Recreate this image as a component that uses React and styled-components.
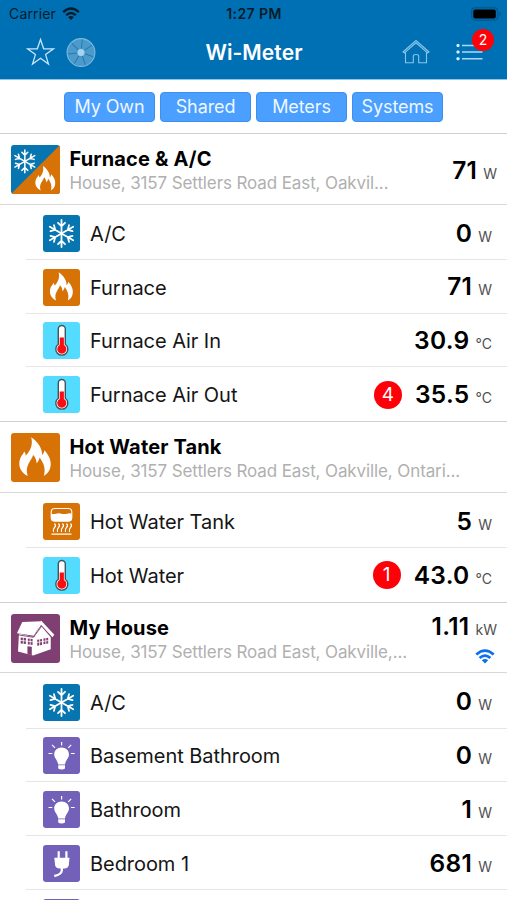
import React from "react";
import styled, { createGlobalStyle } from "styled-components";

const GlobalStyle = createGlobalStyle`
  * {
    box-sizing: border-box;
  }

  body {
    margin: 0;
    background: #fff;
    font-family: Inter, "Liberation Sans", sans-serif;
  }
`;

const Flame = () => (
  <path
    fill="#fff"
    d="M15.4 3.5C21 7 25 13.500 24.500 18.500C25.700 17.500 26.300 16 26.500 14.500C30.500 19 33.300 24.500 31 30.500C30 33 28.400 34.700 26 36C27.700 30 26 25.500 22.500 20.500C22 22.500 21.200 24 20 25.500C19.700 22.500 18.700 20 17 18.500C15.700 23.500 9.500 27.500 12.500 36C7 33.500 3.500 27.500 6.500 20.500C7.500 18.500 9 17.500 9.500 15.500C10.400 16.500 10.700 17.600 10.800 19C15 14.500 17 9.500 15.400 3.500Z"
  />
);

const Snow = () => (
  <g stroke="#fff" strokeWidth="1.8" strokeLinecap="round" fill="none">
    {[0, 60, 120, 180, 240, 300].map((angle) => (
      <path
        key={angle}
        transform={`rotate(${angle} 18.5 18.5)`}
        d="M18.500 18.500V5M15 7.800L18.500 11.200L22 7.800"
      />
    ))}
  </g>
);

const drawings = {
  snow: <Snow />,
  flame: (
    <g transform="translate(2.200 .2) scale(.87)">
      <Flame />
    </g>
  ),
  bigFlame: (
    <g transform="translate(1.400 0) scale(.9)">
      <Flame />
    </g>
  ),
  hvac: (
    <>
      <path d="M37 0V37H0Z" fill="#d77206" />
      <g transform="translate(-1.400 .5) scale(.64)">
        <Snow />
      </g>
      <g transform="translate(15.300 13.800) scale(.57)">
        <Flame />
      </g>
    </>
  ),
  thermometer: (
    <>
      <path
        d="M15.300 22.300V7A3.500 3.500 0 0 1 22.300 7V22.300A6 6 0 1 1 15.300 22.300Z"
        fill="#fff"
        stroke="#42545c"
        strokeWidth="1.400"
      />
      <path
        d="M16.700 15.500H20.900V23.100A4.600 4.600 0 1 1 16.700 23.100Z"
        fill="#f80d12"
      />
    </>
  ),
  heater: (
    <>
      <rect x="8.200" y="5.500" width="20.600" height="12.500" rx="3.500" fill="none" stroke="#fff" strokeWidth="1.100" />
      <path
        fill="#fff"
        d="M8 10.700Q10.500 11.500 13 10.700T18.500 10.700T24 10.700T29 10.700V15Q29 18.500 25.500 18.500H11.500Q8 18.500 8 15Z"
      />
      <path
        fill="none"
        stroke="#fff"
        strokeWidth="1.200"
        d="M11.500 20.500q2 2 0 4t-1 4.500M15.500 20.500q2 2 0 4t-1 4.500M19.500 20.500q2 2 0 4t-1 4.500M23.500 20.500q2 2 0 4t-1 4.500M27.500 20.500q2 2 0 4t-1 4.500M8.500 31.200H28.500"
      />
    </>
  ),
  house: (
    <>
      <path d="M6 15L17.500 17.300L23.200 9.600L30 17.500V26.700L16.700 31.300L5.300 28.300Z" fill="#fff" />
      <path d="M8.500 6L23 5.500L17.400 16.500L4.500 14.500Z" fill="#fff" />
      <path d="M22.700 5L32.700 15.600L31.300 17.500L23.200 8.600L17.200 17.500Z" fill="#fff" />
      <path d="M23 8.300L16.900 17.600L4.800 15.600" fill="none" stroke="#803f72" strokeWidth=".7" />
      <path
        fill="#803f72"
        d="M7.300 17.700l4 .5v4.500l-4-.4ZM12.700 18.500l3.600.4v4.500l-3.600-.4ZM19.800 19.400l3.600-.6v4.600l-3.600.6ZM24.500 18.500l3.600-.6v4.400l-3.600.6ZM12.400 24.400l3.300.3v6.400l-3.300-.8Z"
      />
      <path d="M9.300 17.500v5.500M14.500 18.500v5.500M7 19.900l9.500 1.100M21.600 18.800v5.500M26.300 17.700v5.500M19.500 21.500l9-1.500" stroke="#fff" strokeWidth=".6" />
    </>
  ),
  bulb: (
    <g fill="#fff">
      <path d="M18.600 10.500C23 10.500 26 13.700 26 17.500C26 21 22.400 23.500 22 27.500H15.200C14.800 23.500 11.200 21 11.200 17.500C11.200 13.700 14.200 10.500 18.600 10.500Z" />
      <path d="M15.200 28.300H22V31.500Q20.500 32.500 18.600 32.500T15.200 31.500Z" />
      <path
        stroke="#fff"
        strokeWidth="1.200"
        d="M18.600 5V8.500M9 7.900L12 10.900M28.200 7.900L25.200 10.900M5.500 16.500H9.300M27.900 16.500H31.700"
      />
    </g>
  ),
  plug: (
    <>
      <path d="M15.700 6.200V14M23.400 6.200V14" stroke="#fff" strokeWidth="2.200" />
      <path d="M11.300 12.800H26.500L25.700 20.500Q24.800 23.500 21.500 23.500H16.500Q13 23.500 12.200 20.500Z" fill="#fff" />
      <path d="M18.800 23V25.500Q18.500 29.500 11.300 31" fill="none" stroke="#fff" strokeWidth="2.300" />
    </>
  ),
};

const colors = {
  snow: "#0675b0",
  hvac: "#0675b0",
  flame: "#d77206",
  bigFlame: "#d77206",
  heater: "#d77206",
  thermometer: "#53dcff",
  house: "#803f72",
  bulb: "#7260b9",
  plug: "#7260b9",
};

const systems = [
  {
    name: "Furnace & A/C",
    address: "House, 3157 Settlers Road East, Oakvil...",
    icon: "hvac",
    value: "71",
    unit: "W",
    meters: [
      { name: "A/C", icon: "snow", value: "0", unit: "W" },
      { name: "Furnace", icon: "flame", value: "71", unit: "W" },
      { name: "Furnace Air In", icon: "thermometer", value: "30.9", unit: "°C" },
      { name: "Furnace Air Out", icon: "thermometer", value: "35.5", unit: "°C", alerts: 4 },
    ],
  },
  {
    name: "Hot Water Tank",
    address: "House, 3157 Settlers Road East, Oakville, Ontari...",
    icon: "bigFlame",
    meters: [
      { name: "Hot Water Tank", icon: "heater", value: "5", unit: "W" },
      { name: "Hot Water", icon: "thermometer", value: "43.0", unit: "°C", alerts: 1 },
    ],
  },
  {
    name: "My House",
    address: "House, 3157 Settlers Road East, Oakville,...",
    icon: "house",
    value: "1.11",
    unit: "kW",
    online: true,
    meters: [
      { name: "A/C", icon: "snow", value: "0", unit: "W" },
      { name: "Basement Bathroom", icon: "bulb", value: "0", unit: "W" },
      { name: "Bathroom", icon: "bulb", value: "1", unit: "W" },
      { name: "Bedroom 1", icon: "plug", value: "681", unit: "W" },
      { name: "", icon: "bulb" },
    ],
  },
];

const Wifi = ({ width, color }) => (
  <svg width={width} height={width * 0.75} viewBox="0 0 20 15">
    <g fill="none" stroke={color} strokeWidth="2.700">
      <path d="M1.300 5.600Q10-2.200 18.700 5.600" />
      <path d="M4.600 9Q10 4.200 15.400 9" />
    </g>
    <path d="M6.800 11.200Q10 8.600 13.200 11.200L10 14.500Z" fill={color} />
  </svg>
);

const MeterIcon = ({ name, size }) => (
  <IconBox $size={size} $color={colors[name]}>
    <svg width="100%" height="100%" viewBox="0 0 37 37">
      {drawings[name]}
    </svg>
  </IconBox>
);

const Reading = ({ value, unit }) => (
  <ReadingStyle>
    <Value>{value}</Value>
    <Unit>{unit}</Unit>
  </ReadingStyle>
);

const Header = () => (
  <HeaderStyle>
    <StatusBar>
      <Carrier>
        Carrier
        <Wifi width={18} color="#061c2a" />
      </Carrier>
      <Clock>1:27 PM</Clock>
      <Battery>
        <svg width="31" height="14" viewBox="0 0 31 14">
          <rect x=".7" y=".9" width="26" height="12.200" rx="3.500" fill="none" stroke="#07568a" strokeWidth="1.200" />
          <rect x="2.300" y="2.600" width="22.500" height="8.800" rx="2" fill="#000" />
          <path d="M28.300 5V9Q29.800 8.500 29.800 7T28.300 5Z" fill="#07568a" />
        </svg>
      </Battery>
    </StatusBar>
    <NavBar>
      <NavGroup>
        <svg width="30" height="30" viewBox="0 0 30 30">
          <path
            d="M14.500 2.500L17.700 11.800H27.500L19.600 17.600L22.500 27L14.500 21.300L6.500 27L9.400 17.600L1.500 11.800H11.300Z"
            fill="none"
            stroke="#c5e6fb"
            strokeWidth="1.300"
          />
        </svg>
        <svg width="30" height="30" viewBox="0 0 30 30">
          <circle cx="15" cy="15.500" r="13.900" fill="#4b9aca" stroke="#7ab8dd" strokeWidth="1.100" />
          <g stroke="#1e7db9" strokeWidth="1">
            {[0, 51, 103, 154, 206, 257, 309].map((angle) => (
              <path key={angle} d="M15 11.500V2.500" transform={`rotate(${angle + 6} 15 15.500)`} />
            ))}
          </g>
          <circle cx="15" cy="15.500" r="3.500" fill="#a5d3ee" />
        </svg>
      </NavGroup>
      <Title>Wi-Meter</Title>
      <NavGroup $end>
        <svg width="28" height="26" viewBox="0 0 28 26">
          <path
            d="M1 13L14 1.500L27 13L25.500 13.800L14 3.800L2.500 13.800ZM3.500 13V23.700H11.300V17Q11.300 15.500 14 15.500T16.700 17V23.700H24.500V13"
            fill="none"
            stroke="#8bc5e8"
            strokeWidth="1.100"
          />
        </svg>
        <ListButton>
          <svg width="27" height="20" viewBox="0 0 27 20">
            <g fill="#d9f1ff">
              <rect x=".5" y="2" width="3" height="3" rx="1" />
              <rect x=".5" y="8.600" width="3" height="3" rx="1" />
              <rect x=".5" y="15.200" width="3" height="3" rx="1" />
            </g>
            <path d="M6 3.500H26.500M6 10.100H26.500M6 16.700H26.500" stroke="#a9dafa" strokeWidth="1.500" />
          </svg>
          <NavBadge>2</NavBadge>
        </ListButton>
      </NavGroup>
    </NavBar>
  </HeaderStyle>
);

const App = () => {
  return (
    <Screen>
      <GlobalStyle />
      <Header />
      <Filters>
        <Filter>My Own</Filter>
        <Filter>Shared</Filter>
        <Filter>Meters</Filter>
        <Filter>Systems</Filter>
      </Filters>
      {systems.map((system) => (
        <section key={system.name}>
          <SystemRow>
            <MeterIcon name={system.icon} size={49} />
            <SystemText>
              <SystemName>{system.name}</SystemName>
              <Address>{system.address}</Address>
            </SystemText>
            {system.value && (
              <SystemReading $online={system.online}>
                <Reading value={system.value} unit={system.unit} />
                {system.online && (
                  <Signal>
                    <Wifi width={20} color="#0b6ff2" />
                  </Signal>
                )}
              </SystemReading>
            )}
          </SystemRow>
          <Meters>
            {system.meters.map((meter, i) => (
              <MeterRow key={i}>
                <MeterIcon name={meter.icon} size={37} />
                <MeterName>{meter.name}</MeterName>
                {meter.alerts && <Badge>{meter.alerts}</Badge>}
                {meter.value && <Reading value={meter.value} unit={meter.unit} />}
              </MeterRow>
            ))}
          </Meters>
        </section>
      ))}
    </Screen>
  );
};

const Screen = styled.main`
  width: 507px;
  height: 900px;
  overflow: hidden;
  background: #fff;
`;

const HeaderStyle = styled.header`
  height: 80px;
  background: #0070b4;
  border-bottom: 1px solid #8fc5e4;
`;

const StatusBar = styled.div`
  display: grid;
  grid-template-columns: 1fr auto 1fr;
  align-items: center;
  height: 27px;
  padding: 0 5px 0 9px;
  color: #061c2a;
  font-size: 14px;
`;

const Carrier = styled.div`
  display: flex;
  align-items: center;
  gap: 6px;
  letter-spacing: 0.15px;
`;

const Clock = styled.div`
  margin-right: 3px;
  font-weight: 600;
  letter-spacing: 0.4px;
`;

const Battery = styled.div`
  display: flex;
  justify-content: flex-end;
`;

const NavBar = styled.div`
  display: grid;
  grid-template-columns: 1fr auto 1fr;
  align-items: center;
  height: 50px;
  padding: 0 24px 0 26px;
`;

const NavGroup = styled.div`
  display: flex;
  align-items: center;
  justify-content: ${(props) => (props.$end ? "flex-end" : "flex-start")};
  gap: ${(props) => (props.$end ? "26px" : "10px")};
`;

const Title = styled.h1`
  margin: 0 1px 0 0;
  color: #fff;
  font-size: 21px;
  font-weight: 600;
  letter-spacing: 0.1px;
`;

const ListButton = styled.div`
  position: relative;
  display: flex;
`;

const NavBadge = styled.span`
  position: absolute;
  top: -13px;
  right: -11px;
  width: 22px;
  height: 22px;
  border-radius: 50%;
  background: #fd0309;
  color: #fff;
  font-size: 14px;
  line-height: 22px;
  text-align: center;
`;

const Filters = styled.nav`
  display: flex;
  justify-content: center;
  align-items: center;
  gap: 5px;
  height: 53px;
`;

const Filter = styled.button`
  width: 91px;
  height: 30px;
  padding: 0;
  border: 1px solid #3c90f2;
  border-radius: 4px;
  background: #4b9fff;
  color: #eef7ff;
  font-family: inherit;
  font-size: 18px;
  letter-spacing: -0.1px;
`;

const SystemRow = styled.div`
  display: flex;
  align-items: center;
  height: 71.5px;
  padding: 2px 10px 0 10.5px;
  border-top: 1px solid #cfcfcf;
  border-bottom: 1px solid #d8d8d8;
`;

const IconBox = styled.span`
  flex: none;
  width: ${(props) => props.$size}px;
  height: ${(props) => props.$size}px;
  border-radius: 3px;
  overflow: hidden;
  background: ${(props) => props.$color};

  svg {
    display: block;
  }
`;

const SystemText = styled.div`
  flex: 1;
  padding-top: 3px;
  margin-left: 10px;
  white-space: nowrap;
`;

const SystemName = styled.h2`
  margin: 0;
  color: #000;
  font-size: 20px;
  font-weight: 700;
  letter-spacing: 0.15px;
  line-height: 24px;
`;

const Address = styled.p`
  margin: 0;
  color: #b0b0b0;
  font-size: 17px;
  letter-spacing: -0.11px;
  line-height: 24px;
`;

const SystemReading = styled.div`
  display: flex;
  flex-direction: column;
  align-items: flex-end;
  gap: ${(props) => (props.$online ? "4px" : "0")};
  padding: ${(props) => (props.$online ? "0 0 5px" : "1px 0 0")};
`;

const Signal = styled.div`
  display: flex;
  margin-right: 2px;
`;

const Meters = styled.div`
  padding-top: 1.5px;
`;

const MeterRow = styled.div`
  display: flex;
  align-items: center;
  height: 53.8px;
  margin-left: 26px;
  padding: 2px 15px 0 17px;
  border-bottom: 1px solid #e6e6e6;

  &:last-child {
    border-color: transparent;
  }
`;

const MeterName = styled.span`
  flex: 1;
  padding-top: 1px;
  margin-left: 10px;
  color: #151515;
  font-size: 20px;
  letter-spacing: -0.05px;
`;

const ReadingStyle = styled.div`
  display: flex;
  align-items: baseline;
  gap: 6px;
  padding-top: 3.5px;
  line-height: 28px;
`;

const Value = styled.span`
  color: #000;
  font-size: 24.5px;
  font-weight: 600;
  letter-spacing: 0.3px;
`;

const Unit = styled.span`
  margin-bottom: 1px;
  color: #505050;
  font-size: 14px;
`;

const Badge = styled.span`
  width: 28px;
  height: 28px;
  margin-right: 13px;
  border-radius: 50%;
  background: #ff0008;
  color: #fff;
  font-size: 19px;
  line-height: 28px;
  text-align: center;
`;

export default App;
